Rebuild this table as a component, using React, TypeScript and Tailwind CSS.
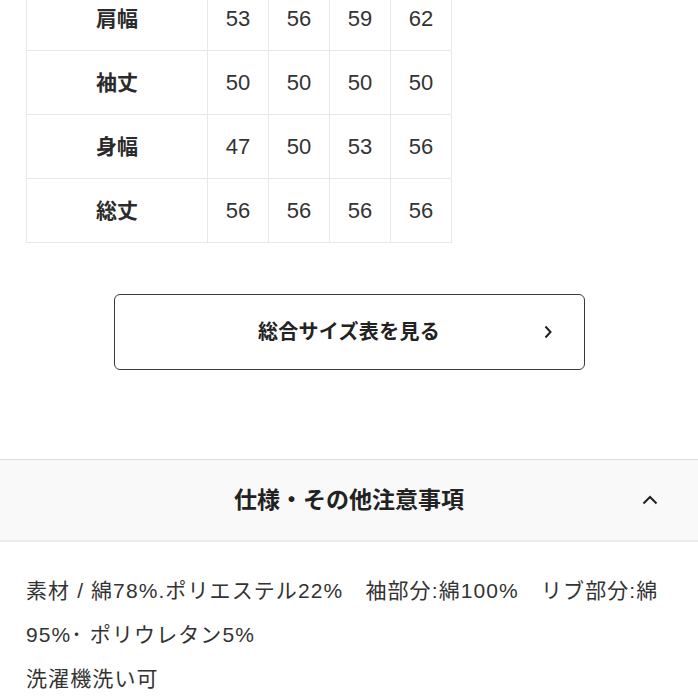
import React from "react";

const rows: { label: string; values: number[] }[] = [
  { label: "肩幅", values: [53, 56, 59, 62] },
  { label: "袖丈", values: [50, 50, 50, 50] },
  { label: "身幅", values: [47, 50, 53, 56] },
  { label: "総丈", values: [56, 56, 56, 56] },
];

const font = { fontFamily: '"Liberation Sans", "Noto Sans CJK JP", sans-serif' };

const App: React.FC = () => {
  return (
    <div className="w-[698px] h-[698px] overflow-hidden bg-white text-[#333]" style={font}>
      {/* size table */}
      <div className="pl-[26px] -mt-[14px]">
        <table className="border-collapse">
          <tbody>
            {rows.map((row) => (
              <tr key={row.label} className="h-[64px]">
                <td className="w-[181px] border border-[#e8e8e8] text-center text-[21px] font-bold text-[#2b2b2b]">
                  {row.label}
                </td>
                {row.values.map((v, i) => (
                  <td key={i} className="w-[61px] border border-[#e8e8e8] text-center text-[22px] text-[#333]">
                    {v}
                  </td>
                ))}
              </tr>
            ))}
          </tbody>
        </table>
      </div>

      {/* size chart link */}
      <div className="flex justify-center pt-[51px]">
        <button className="relative w-[471px] h-[76px] rounded-[6px] border-[1.5px] border-[#3a3a3a] bg-white flex items-center justify-center">
          <span className="text-[20px] font-bold text-[#222] tracking-[0.3px]">総合サイズ表を見る</span>
          <svg
            className="absolute right-[31px] top-1/2 -translate-y-1/2"
            width="10"
            height="14"
            viewBox="0 0 10 14"
            fill="none"
            stroke="#222"
            strokeWidth="2"
          >
            <path d="M2.5 1.5 L7.5 7 L2.5 12.5" />
          </svg>
        </button>
      </div>

      {/* spec section */}
      <div className="mt-[89px] h-[83px] border-t border-[#dcdcdc] border-b-2 border-b-[#ececec] bg-[#f9f9f9] relative flex items-center justify-center">
        <span className="text-[23px] font-bold text-[#222]">仕様・その他注意事項</span>
        <svg
          className="absolute right-[40px] top-1/2 -translate-y-1/2"
          width="16"
          height="10"
          viewBox="0 0 16 10"
          fill="none"
          stroke="#222"
          strokeWidth="2"
        >
          <path d="M1.5 8.5 L8 2 L14.5 8.5" />
        </svg>
      </div>

      <div className="px-[26px] pt-[27px] text-[21px] leading-[44px] tracking-[1.1px] text-[#333]">
        <p className="whitespace-nowrap">素材 / 綿78%.ポリエステル22%　袖部分:綿100%　リブ部分:綿</p>
        <p>95%･ ポリウレタン5%</p>
        <p>洗濯機洗い可</p>
      </div>
    </div>
  );
};

export default App;
